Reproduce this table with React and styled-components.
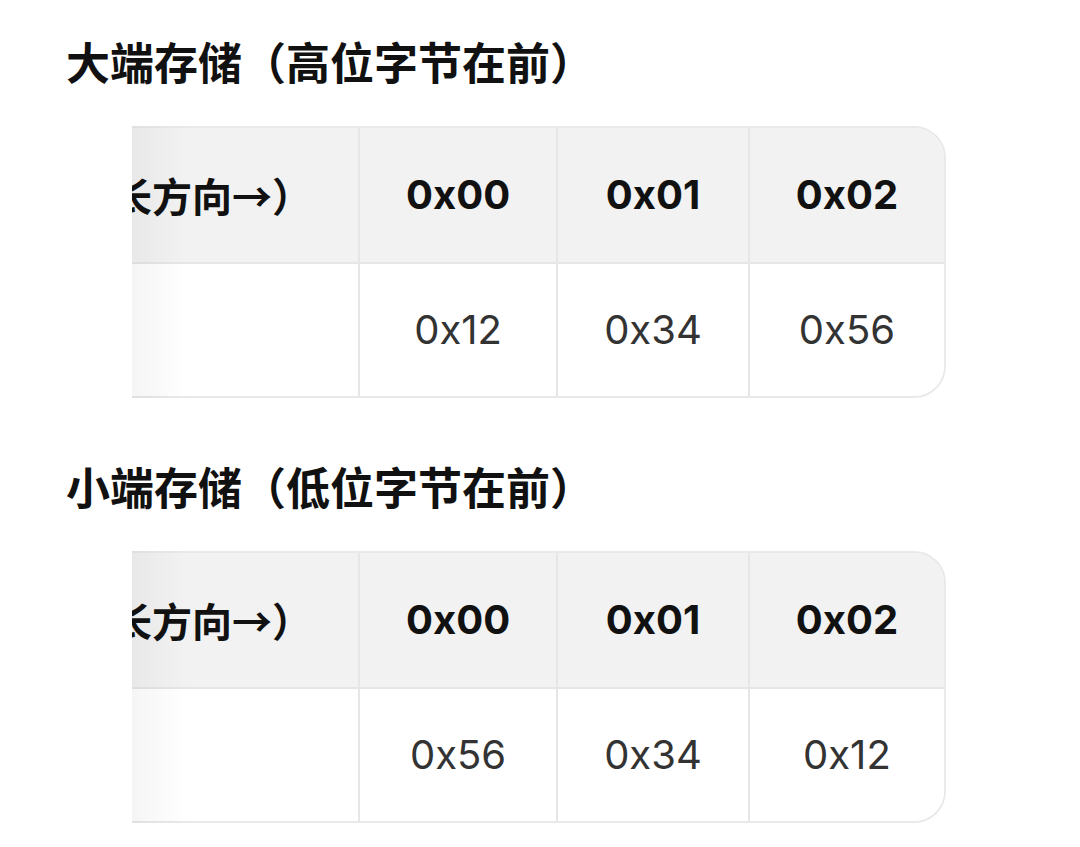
import React, { useLayoutEffect, useRef } from "react";
import styled, { createGlobalStyle } from "styled-components";

const Global = createGlobalStyle`
  html, body { margin: 0; padding: 0; background: #ffffff; }
  body {
    font-family: Inter, "Noto Sans CJK SC", sans-serif;
    color: #111;
    text-spacing-trim: space-all;
  }
`;

const Page = styled.div`
  width: 1080px;
  padding: 34px 68px 0 66px;
  box-sizing: border-box;
  display: flex;
  flex-direction: column;
`;

const Heading = styled.h2`
  margin: 0 0 32px 0;
  font-size: 44px;
  line-height: 60px;
  font-weight: 700;
  color: #111;
  font-family: Inter, "Noto Sans CJK SC", sans-serif;
  text-spacing-trim: space-all;
`;

const Section = styled.section`
  display: flex;
  flex-direction: column;
  & + & { margin-top: 61px; }
`;

const TableFrame = styled.div`
  position: relative;
  margin: 0 66px 0 66px;
`;

const Scroller = styled.div`
  overflow-x: auto;
  scrollbar-width: none;
  &::-webkit-scrollbar { display: none; }
`;

const Fade = styled.div`
  position: absolute;
  left: 0;
  top: 0;
  bottom: 0;
  width: 56px;
  pointer-events: none;
  background: linear-gradient(to right, rgba(0, 0, 0, 0.04), rgba(0, 0, 0, 0));
`;

const Table = styled.table`
  border-collapse: separate;
  border-spacing: 0;
  border: 2px solid #e9e9e9;
  border-radius: 32px;
  overflow: hidden;
  white-space: nowrap;
`;

const HeadCell = styled.th`
  background: #f2f2f2;
  font-weight: 700;
  font-size: 40px;
  line-height: 56px;
  color: #111;
  padding: 39px 46px;
  text-align: center;
  border-bottom: 2px solid #e6e6e6;
  border-right: 2px solid #e6e6e6;
  font-family: ${(p) => (p.$cjk ? '"Noto Sans CJK SC", sans-serif' : 'Inter, "Noto Sans CJK SC", sans-serif')};
  text-spacing-trim: space-all;
  &:last-child { border-right: none; }
`;

const BodyCell = styled.td`
  background: #ffffff;
  font-weight: 400;
  font-size: 40px;
  line-height: 56px;
  color: #333;
  padding: 38px 46px;
  text-align: center;
  border-right: 2px solid #e6e6e6;
  &:last-child { border-right: none; }
`;

function ByteTable({ values }) {
  const ref = useRef(null);
  useLayoutEffect(() => {
    if (ref.current) ref.current.scrollLeft = ref.current.scrollWidth;
  }, []);
  return (
    <TableFrame>
      <Scroller ref={ref}>
        <Table>
          <thead>
            <tr>
              <HeadCell $cjk>内存地址（增长方向→）</HeadCell>
              <HeadCell>0x00</HeadCell>
              <HeadCell>0x01</HeadCell>
              <HeadCell>0x02</HeadCell>
            </tr>
          </thead>
          <tbody>
            <tr>
              <BodyCell>数据</BodyCell>
              {values.map((v, i) => (
                <BodyCell key={i}>{v}</BodyCell>
              ))}
            </tr>
          </tbody>
        </Table>
      </Scroller>
      <Fade />
    </TableFrame>
  );
}

export default function App() {
  return (
    <>
      <Global />
      <Page>
        <Section>
          <Heading>大端存储（高位字节在前）</Heading>
          <ByteTable values={["0x12", "0x34", "0x56"]} />
        </Section>
        <Section>
          <Heading>小端存储（低位字节在前）</Heading>
          <ByteTable values={["0x56", "0x34", "0x12"]} />
        </Section>
      </Page>
    </>
  );
}
